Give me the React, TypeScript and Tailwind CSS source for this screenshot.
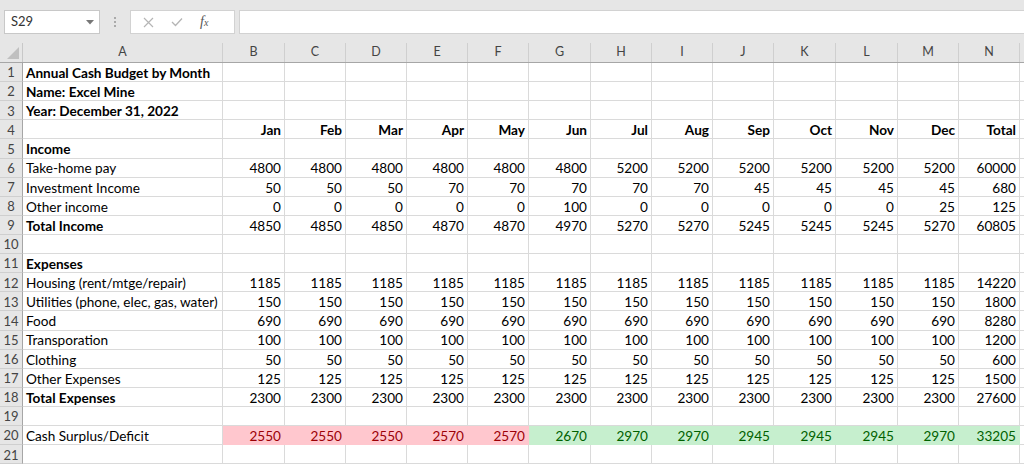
import React from "react";

// Excel-like sheet: formula bar, column headers, annual cash budget rows.

const COLS = ["B", "C", "D", "E", "F", "G", "H", "I", "J", "K", "L", "M", "N"];
const WIDTHS = [62, 61, 61, 61, 61, 62, 61, 61, 61, 62, 62, 61, 61];

type Row = {
  label?: string;
  bold?: boolean;
  values?: (string | number)[];
  boldValues?: boolean;
  surplus?: boolean;
};

const ROWS: Row[] = [
  { label: "Annual Cash Budget by Month", bold: true },
  { label: "Name: Excel Mine", bold: true },
  { label: "Year: December 31, 2022", bold: true },
  {
    values: ["Jan", "Feb", "Mar", "Apr", "May", "Jun", "Jul", "Aug", "Sep", "Oct", "Nov", "Dec", "Total"],
    boldValues: true,
  },
  { label: "Income", bold: true },
  { label: "Take-home pay", values: [4800, 4800, 4800, 4800, 4800, 4800, 5200, 5200, 5200, 5200, 5200, 5200, 60000] },
  { label: "Investment Income", values: [50, 50, 50, 70, 70, 70, 70, 70, 45, 45, 45, 45, 680] },
  { label: "Other income", values: [0, 0, 0, 0, 0, 100, 0, 0, 0, 0, 0, 25, 125] },
  {
    label: "Total Income",
    bold: true,
    values: [4850, 4850, 4850, 4870, 4870, 4970, 5270, 5270, 5245, 5245, 5245, 5270, 60805],
  },
  {},
  { label: "Expenses", bold: true },
  { label: "Housing (rent/mtge/repair)", values: [...Array(12).fill(1185), 14220] },
  { label: "Utilities (phone, elec, gas, water)", values: [...Array(12).fill(150), 1800] },
  { label: "Food", values: [...Array(12).fill(690), 8280] },
  { label: "Transporation", values: [...Array(12).fill(100), 1200] },
  { label: "Clothing", values: [...Array(12).fill(50), 600] },
  { label: "Other Expenses", values: [...Array(12).fill(125), 1500] },
  { label: "Total Expenses", bold: true, values: [...Array(12).fill(2300), 27600] },
  {},
  {
    label: "Cash Surplus/Deficit",
    values: [2550, 2550, 2550, 2570, 2570, 2670, 2970, 2970, 2945, 2945, 2945, 2970, 33205],
    surplus: true,
  },
  {},
];

function FormulaBar() {
  return (
    <div className="h-[43px] bg-[#e6e6e6] flex items-start pt-[10px] pl-[4px]">
      <div className="w-[96px] h-[24px] bg-white border border-[#c8c8c8] flex items-center justify-between pl-[6px] pr-[5px]">
        <span className="text-[13px] text-[#333]">S29</span>
        <svg width="8" height="5" viewBox="0 0 8 5">
          <path d="M0 0 L8 0 L4 4.5 Z" fill="#777" />
        </svg>
      </div>
      <div className="w-[30px] h-[24px] flex flex-col items-center justify-center gap-[2px]">
        <span className="w-[2px] h-[2px] bg-[#aaa]" />
        <span className="w-[2px] h-[2px] bg-[#aaa]" />
        <span className="w-[2px] h-[2px] bg-[#aaa]" />
      </div>
      <div className="w-[105px] h-[24px] bg-white border border-[#d2d2d2] flex items-center pl-[12px] gap-[17px]">
        <svg width="11" height="11" viewBox="0 0 11 11">
          <path d="M1 1 L10 10 M10 1 L1 10" stroke="#b5b5b5" strokeWidth="1.2" />
        </svg>
        <svg width="12" height="10" viewBox="0 0 12 10">
          <path d="M1 5 L4.5 8.5 L11 1.5" stroke="#b5b5b5" strokeWidth="1.3" fill="none" />
        </svg>
        <span className="text-[14px] italic text-[#555] font-['Liberation_Serif',serif] leading-none">
          f<span className="text-[10px]">x</span>
        </span>
      </div>
      <div className="flex-1 ml-[4px] h-[24px] bg-white border border-[#d2d2d2] border-r-0" />
    </div>
  );
}

function HeaderRow() {
  return (
    <div className="flex h-[20px] bg-[#e6e6e6] border-b border-[#a6a6a6]">
      <div className="w-[23px] shrink-0 border-r border-[#c8c8c8] relative">
        <svg className="absolute right-[3px] bottom-[3px]" width="12" height="12" viewBox="0 0 12 12">
          <path d="M12 0 L12 12 L0 12 Z" fill="#c0c0c0" />
        </svg>
      </div>
      <div className="w-[200px] shrink-0 border-r border-[#cfcfcf] flex items-center justify-center text-[12.5px] text-[#444]">
        A
      </div>
      {COLS.map((c, i) => (
        <div
          key={c}
          style={{ width: WIDTHS[i] }}
          className="shrink-0 border-r border-[#cfcfcf] flex items-center justify-center text-[12.5px] text-[#444]"
        >
          {c}
        </div>
      ))}
      <div className="flex-1" />
    </div>
  );
}

function SheetRow({ row, n }: { row: Row; n: number }) {
  return (
    <div className="flex h-[19.12px] border-b border-[#dadada]">
      <div className="w-[23px] shrink-0 bg-[#e6e6e6] border-r border-[#a6a6a6] flex items-center justify-center pt-[2px] text-[13px] text-[#444] -mb-px border-b border-b-[#cfcfcf]">
        {n}
      </div>
      <div
        className={
          "w-[200px] shrink-0 border-r border-[#dadada] flex items-center pl-[3px] pt-[2px] text-[13.6px] text-black whitespace-nowrap " +
          (row.bold ? "font-bold" : "")
        }
      >
        {row.label}
      </div>
      {COLS.map((c, i) => {
        const v = row.values?.[i];
        const red = row.surplus && i < 5;
        const green = row.surplus && i >= 5;
        return (
          <div
            key={c}
            style={{ width: WIDTHS[i] }}
            className={
              "shrink-0 flex items-center justify-end pr-[3px] pt-[2px] text-[13.6px] " +
              (red
                ? "bg-[#ffc7ce] text-[#9c0006] -mb-px border-b border-b-[#ffc7ce] border-r border-r-[#ffc7ce]"
                : green
                ? "bg-[#c6efce] text-[#006100] -mb-px border-b border-b-[#c6efce] border-r border-r-[#c6efce]"
                : "border-r border-[#dadada] text-black ") +
              (row.boldValues ? " font-bold" : "")
            }
          >
            {v}
          </div>
        );
      })}
      <div className="flex-1" />
    </div>
  );
}

export default function App() {
  return (
    <div className="w-[1024px] h-[467px] overflow-hidden bg-white font-['Lato','Liberation_Sans',sans-serif]">
      <FormulaBar />
      <HeaderRow />
      {ROWS.map((r, i) => (
        <SheetRow key={i} row={r} n={i + 1} />
      ))}
    </div>
  );
}
